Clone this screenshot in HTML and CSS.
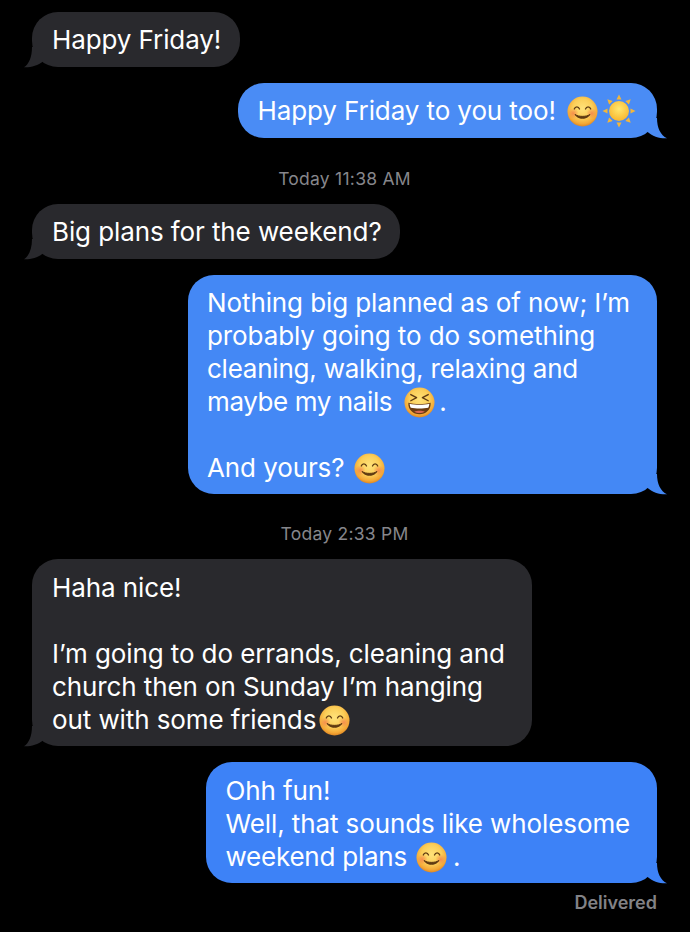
FILE: index.html
```html
<!DOCTYPE html>
<html lang="en">
<head>
<meta charset="utf-8">
<title>Messages</title>
<link rel="stylesheet" href="styles.css">
</head>
<body>
<svg class="defs" width="0" height="0" aria-hidden="true">
  <defs>
    <radialGradient id="face" cx="50%" cy="40%" r="60%">
      <stop offset="0" stop-color="#ffe27a"/>
      <stop offset="0.55" stop-color="#fbce58"/>
      <stop offset="0.85" stop-color="#f4a836"/>
      <stop offset="1" stop-color="#dd8522"/>
    </radialGradient>
    <radialGradient id="cheek">
      <stop offset="0" stop-color="#f47f4a" stop-opacity=".8"/>
      <stop offset="1" stop-color="#f47f4a" stop-opacity="0"/>
    </radialGradient>
    <radialGradient id="sun" cx="50%" cy="40%" r="60%">
      <stop offset="0" stop-color="#ffe870"/>
      <stop offset="1" stop-color="#f8b72f"/>
    </radialGradient>
    <symbol id="smile" viewBox="0 0 32 32">
      <circle cx="16" cy="16" r="15.500" fill="url(#face)"/>
      <circle cx="6.500" cy="18" r="5.500" fill="url(#cheek)"/>
      <circle cx="25.500" cy="18" r="5.500" fill="url(#cheek)"/>
      <path d="M7.500 13.400c1-3 4.400-3 5.400 0M19.100 13.400c1-3 4.400-3 5.400 0" fill="none" stroke="#5e3a12" stroke-width="1.300" stroke-linecap="round"/>
      <path d="M8.300 19c3 5.400 12.400 5.400 15.400 0-3.600 2.700-11.800 2.700-15.400 0z" fill="#5e3a12" stroke="#5e3a12" stroke-width="1" stroke-linejoin="round"/>
    </symbol>
    <symbol id="laugh" viewBox="0 0 32 32">
      <circle cx="16" cy="16" r="15.500" fill="url(#face)"/>
      <path d="M7 7.800l6 3.200-6 3.200M25 7.800L19 11l6 3.200" fill="none" stroke="#5e3a12" stroke-width="1.400" stroke-linecap="round" stroke-linejoin="round"/>
      <path d="M4.500 16.300c6 1.700 17 1.700 23 0 .6 7-5 11.900-11.500 11.900S3.900 23.300 4.500 16.300z" fill="#6b3c12"/>
      <path d="M5.800 17.400c5.500 1.300 14.900 1.300 20.400 0-.2 2-.6 3-1.200 4-5 1-13 1-18 0-.6-1-1-2-1.200-4z" fill="#fff"/>
      <path d="M10.500 25.500c3-1.400 8-1.400 11 0-3 1.800-8 1.800-11 0z" fill="#d9684f"/>
    </symbol>
    <symbol id="sunny" viewBox="0 0 34 34">
      <g fill="#f3b63a">
        <path d="M17 .5l2.500 5h-5z"/>
        <path d="M17 33.500l2.500-5h-5z"/>
        <path d="M.5 17l5-2.500v5z"/>
        <path d="M33.500 17l-5-2.500v5z"/>
        <path d="M5.300 5.300l5.300 1.800-3.500 3.500z"/>
        <path d="M28.700 5.300l-5.300 1.800 3.500 3.500z"/>
        <path d="M5.300 28.700l5.300-1.800-3.500-3.500z"/>
        <path d="M28.700 28.700l-5.300-1.800 3.500-3.500z"/>
      </g>
      <circle cx="17" cy="17" r="10" fill="url(#sun)"/>
    </symbol>
    <symbol id="tail-in" viewBox="0 0 20 21">
      <path d="M8 0C8 10 5 17 0 20.300c6 .5 14-1.800 19-5.800V0z"/>
    </symbol>
    <symbol id="tail-out" viewBox="0 0 22 21">
      <path d="M12 0C12 10 15.500 17 22 20.300c-6.500.5-14.500-1.800-20-6.800V0z"/>
    </symbol>
  </defs>
</svg>
<main class="thread">
  <div class="bubble in w-friday">Happy Friday!<svg class="tail"><use href="#tail-in"/></svg></div>

  <div class="bubble out w-too">Happy Friday to you too!<svg class="emoji first"><use href="#smile"/></svg><svg class="emoji sun"><use href="#sunny"/></svg><svg class="tail"><use href="#tail-out"/></svg></div>

  <p class="stamp">Today 11:38 AM</p>

  <div class="bubble in w-plans">Big plans for the weekend?<svg class="tail"><use href="#tail-in"/></svg></div>

  <div class="bubble out w-nothing">Nothing big planned as of now; I’m<br>probably going to do something<br><span class="snug">cleaning, walking, relaxing and</span><br><span class="snugger">maybe my nails</span><svg class="emoji first nails"><use href="#laugh"/></svg><span class="after">.</span><br><br>And yours?<svg class="emoji first yours"><use href="#smile"/></svg><svg class="tail"><use href="#tail-out"/></svg></div>

  <p class="stamp second">Today 2:33 PM</p>

  <div class="bubble in w-haha">Haha nice!<br><br>I’m going to do errands, cleaning and<br>church then on Sunday I’m hanging<br>out with some friends<svg class="emoji tight"><use href="#smile"/></svg><svg class="tail"><use href="#tail-in"/></svg></div>

  <div class="bubble out w-ohh">Ohh fun!<br>Well, that sounds like wholesome<br><span class="snug">weekend plans</span><svg class="emoji first plans"><use href="#smile"/></svg><span class="after wide">.</span><svg class="tail"><use href="#tail-out"/></svg></div>

  <p class="delivered">Delivered</p>
</main>
</body>
</html>
```
FILE: styles.css
```css
* { box-sizing: border-box; }
html, body { margin: 0; background: #000; }
body { width: 690px; height: 932px; overflow: hidden; font-family: Inter, "Liberation Sans", sans-serif; }
.defs { position: absolute; }
.thread { display: flex; flex-direction: column; padding: 12px 33px 0 32px; }
.bubble { position: relative; flex: none; padding: 11px 20px; border-radius: 26px; font-size: 26px; line-height: 33px; letter-spacing: -.1px; color: #fff; white-space: nowrap; }
.in { align-self: flex-start; background: #29292d; fill: #29292d; }
.out { align-self: flex-end; margin-top: 16px; padding-left: 19.500px; }
.tail { position: absolute; bottom: -1px; height: 21px; }
.in .tail { left: -8px; width: 20px; }
.out .tail { right: -10px; width: 22px; }
.emoji { display: inline-block; width: 31px; height: 31px; vertical-align: -7px; }
.emoji.first { margin-left: 11px; }
.emoji.tight { margin-left: 3px; }
.emoji.nails { margin-left: 12px; }
.emoji.yours { margin-left: 10px; }
.emoji.plans { margin-left: 9px; }
.emoji.sun { width: 34px; height: 34px; margin-left: 4px; vertical-align: -8px; }
.after { margin-left: 4px; }
.after.wide { margin-left: 6px; }
.snug { letter-spacing: -.23px; }
.snugger { letter-spacing: -.4px; }
.stamp { margin: 32px 0 16px; height: 18px; text-align: center; font-size: 17.500px; line-height: 18px; font-weight: 400; letter-spacing: .25px; color: #86868b; }
.stamp.second { margin-top: 31px; }
.delivered { margin: 11px 0 0; align-self: flex-end; font-size: 18px; line-height: 18px; font-weight: 600; color: #828286; }
.w-friday { width: 208px; height: 55px; }
.w-too { width: 419px; height: 55px; background: #4a8cf5; fill: #4a8cf5; }
.w-plans { width: 368px; height: 55px; }
.w-nothing { width: 469px; height: 219px; padding-left: 19px; background: #4488f5; fill: #4488f5; }
.w-haha { width: 500px; padding-top: 12px; padding-bottom: 10px; }
.w-ohh { width: 451px; padding-top: 12px; padding-bottom: 10px; background: #3d82f7; fill: #3d82f7; }
```
